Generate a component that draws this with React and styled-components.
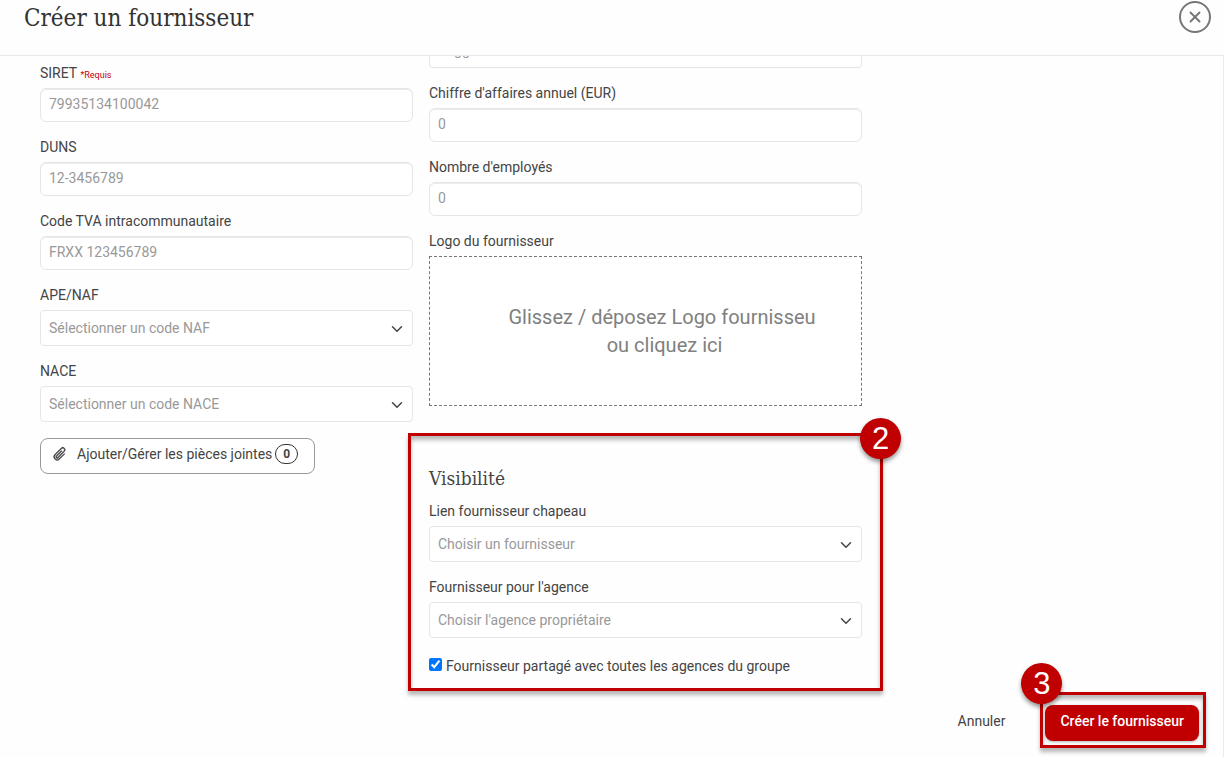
import React, { useState } from "react";
import styled, { createGlobalStyle } from "styled-components";
import { BsPaperclip } from "react-icons/bs";
import { FiChevronDown, FiX } from "react-icons/fi";

const GlobalStyle = createGlobalStyle`
  * {
    box-sizing: border-box;
  }
  body {
    margin: 0;
    background: #fefefe;
    color: #444;
    font-family: Roboto, "Liberation Sans", sans-serif;
    font-size: 14px;
    line-height: 20px;
  }
  button, input, select {
    font: inherit;
    color: inherit;
  }
`;

const Modal = styled.div`
  display: flex;
  flex-direction: column;
  min-height: 100vh;
`;

const Header = styled.header`
  display: flex;
  align-items: flex-start;
  justify-content: space-between;
  height: 56px;
  padding: 1px 13px 0 24px;
  border-bottom: 1px solid #e8e8e8;
`;

const Title = styled.h1`
  margin: 0;
  font-family: "Roboto Slab", "DejaVu Serif Condensed", "DejaVu Serif", serif;
  font-size: 24px;
  font-weight: 400;
  line-height: 34px;
  color: #333;
`;

const CloseButton = styled.button`
  display: flex;
  align-items: center;
  justify-content: center;
  width: 32px;
  height: 32px;
  padding: 0;
  border: 2px solid #777;
  border-radius: 50%;
  background: none;
  color: #777;
`;

const Body = styled.form`
  flex: 1;
  overflow: hidden;
  padding: 7px 17px 8px 40px;
  border-right: 1px solid #ebebeb;
`;

const Columns = styled.div`
  display: grid;
  grid-template-columns: 373fr 433fr 328fr;
  column-gap: 16px;
  align-items: start;
`;

const Column = styled.div`
  display: flex;
  flex-direction: column;
  align-items: stretch;
  gap: 15px;
  margin-top: ${({ $scrolled }) => ($scrolled ? "-31px" : "0")};
`;

const Field = styled.div`
  display: flex;
  flex-direction: column;
  gap: 5px;
`;

const Label = styled.label`
  height: 20px;
  line-height: 20px;
`;

const Required = styled.small`
  font-size: 9px;
  color: #c00000;
`;

const Input = styled.input`
  width: 100%;
  height: 34px;
  padding: 0 8px 2px;
  border: 1px solid #e6e6e6;
  border-radius: 6px;
  background: #fff;
  box-shadow: inset 0 1px 0 #ebebeb;
  &::placeholder {
    color: #999;
    opacity: 1;
  }
`;

const SelectBox = styled.div`
  position: relative;
  svg {
    position: absolute;
    top: 10px;
    right: 7px;
    pointer-events: none;
  }
`;

const Select = styled.select`
  display: block;
  width: 100%;
  height: 36px;
  padding: 0 32px 0 8px;
  border: 1px solid #e6e6e6;
  border-radius: 4px;
  appearance: none;
  background: #fff;
  color: #999;
`;

const AttachButton = styled.button`
  display: flex;
  align-items: center;
  align-self: flex-start;
  height: 36px;
  margin-top: 1px;
  padding: 0 16px 4px 11px;
  border: 1px solid #999;
  border-radius: 8px;
  background: #fff;
  svg {
    margin-right: 9px;
    transform: rotate(45deg);
    stroke: currentColor;
    stroke-width: 0.4;
  }
`;

const Count = styled.span`
  width: 23px;
  height: 20px;
  margin-left: 3px;
  border: 1px solid #333;
  border-radius: 10px;
  font-size: 12px;
  font-weight: 700;
  line-height: 18px;
  text-align: center;
`;

const DropZone = styled.button`
  height: 150px;
  padding: 0 0 0 38px;
  border: 1px dashed #777;
  background: #fff;
  color: #808080;
  font-size: 20px;
  line-height: 28px;
`;

const Callout = styled.div`
  position: relative;
  border: 3px solid #c00000;
  box-shadow: 0 4px 4px rgba(0, 0, 0, 0.28), inset 0 4px 4px rgba(0, 0, 0, 0.28);
`;

const VisibilityCallout = styled(Callout)`
  margin: 12px -21px 0;
  padding: 30px 18px 9px;
`;

const SubmitCallout = styled(Callout)`
  padding: 10px 4px 4px 2px;
`;

const Step = styled.span`
  position: absolute;
  top: ${({ $corner }) => ($corner === "right" ? "-18px" : "-32px")};
  ${({ $corner }) => $corner}: ${({ $corner }) => ($corner === "right" ? "-21px" : "-22px")};
  width: 41px;
  height: 41px;
  border-radius: 50%;
  background: #c00000;
  box-shadow: 0 3px 4px rgba(0, 0, 0, 0.4);
  color: #fff;
  font-family: "Liberation Sans", Arial, sans-serif;
  font-size: 31px;
  line-height: 41px;
  text-align: center;
`;

const SectionTitle = styled.h2`
  margin: 0 0 11px;
  font-family: "Roboto Slab", "DejaVu Serif Condensed", "DejaVu Serif", serif;
  font-size: 19px;
  font-weight: 400;
  line-height: 24px;
`;

const CheckLabel = styled.label`
  display: flex;
  align-items: center;
  gap: 4px;
  height: 26px;
  input {
    width: 13px;
    height: 13px;
    margin: 0 0 3px;
  }
`;

const Footer = styled.footer`
  display: flex;
  align-items: center;
  justify-content: flex-end;
  gap: 35px;
  margin-top: 1px;
`;

const CancelButton = styled.button`
  padding: 2px 0 0;
  border: 0;
  background: none;
`;

const SubmitButton = styled.button`
  display: block;
  height: 36px;
  padding: 0 15px 4px;
  border: 0;
  border-radius: 8px;
  background: #c00000;
  box-shadow: 0 1px 3px rgba(0, 0, 0, 0.3);
  color: #fff;
  font-weight: 500;
`;

const TextField = ({ id, label, placeholder, required }) => (
  <Field>
    <Label htmlFor={id}>
      {label} {required && <Required>*Requis</Required>}
    </Label>
    <Input id={id} placeholder={placeholder} />
  </Field>
);

const Dropdown = ({ placeholder, ...props }) => (
  <SelectBox>
    <Select defaultValue="" {...props}>
      <option value="">{placeholder}</option>
    </Select>
    <FiChevronDown size={18} />
  </SelectBox>
);

const SelectField = ({ id, label, placeholder }) => (
  <Field>
    <Label htmlFor={id}>{label}</Label>
    <Dropdown id={id} placeholder={placeholder} />
  </Field>
);

export default function App() {
  const [shared, setShared] = useState(true);
  return (
    <>
      <GlobalStyle />
      <Modal>
        <Header>
          <Title>Créer un fournisseur</Title>
          <CloseButton type="button" aria-label="Fermer">
            <FiX size={18} strokeWidth={2.5} />
          </CloseButton>
        </Header>
        <Body onSubmit={e => e.preventDefault()}>
          <Columns>
            <Column>
              <TextField id="siret" label="SIRET" placeholder="79935134100042" required />
              <TextField id="duns" label="DUNS" placeholder="12-3456789" />
              <TextField id="tva" label="Code TVA intracommunautaire" placeholder="FRXX 123456789" />
              <SelectField id="naf" label="APE/NAF" placeholder="Sélectionner un code NAF" />
              <SelectField id="nace" label="NACE" placeholder="Sélectionner un code NACE" />
              <AttachButton type="button">
                <BsPaperclip size={16} />
                Ajouter/Gérer les pièces jointes
                <Count>0</Count>
              </AttachButton>
            </Column>
            <Column $scrolled>
              <Dropdown aria-label="Suggestions" placeholder="Suggestions" />
              <TextField id="ca" label="Chiffre d'affaires annuel (EUR)" placeholder="0" />
              <TextField id="employes" label="Nombre d'employés" placeholder="0" />
              <Field>
                <Label htmlFor="logo">Logo du fournisseur</Label>
                <DropZone id="logo" type="button">
                  Glissez / déposez Logo fournisseu{"\u00a0"}
                  <br />
                  ou cliquez ici
                </DropZone>
              </Field>
              <VisibilityCallout>
                <Step $corner="right">2</Step>
                <SectionTitle>Visibilité</SectionTitle>
                <Column>
                  <SelectField id="chapeau" label="Lien fournisseur chapeau" placeholder="Choisir un fournisseur" />
                  <SelectField id="agence" label="Fournisseur pour l'agence" placeholder="Choisir l'agence propriétaire" />
                  <CheckLabel>
                    <input type="checkbox" checked={shared} onChange={e => setShared(e.target.checked)} />
                    Fournisseur partagé avec toutes les agences du groupe
                  </CheckLabel>
                </Column>
              </VisibilityCallout>
            </Column>
          </Columns>
          <Footer>
            <CancelButton type="button">Annuler</CancelButton>
            <SubmitCallout>
              <Step $corner="left">3</Step>
              <SubmitButton type="submit">Créer le fournisseur</SubmitButton>
            </SubmitCallout>
          </Footer>
        </Body>
      </Modal>
    </>
  );
}
